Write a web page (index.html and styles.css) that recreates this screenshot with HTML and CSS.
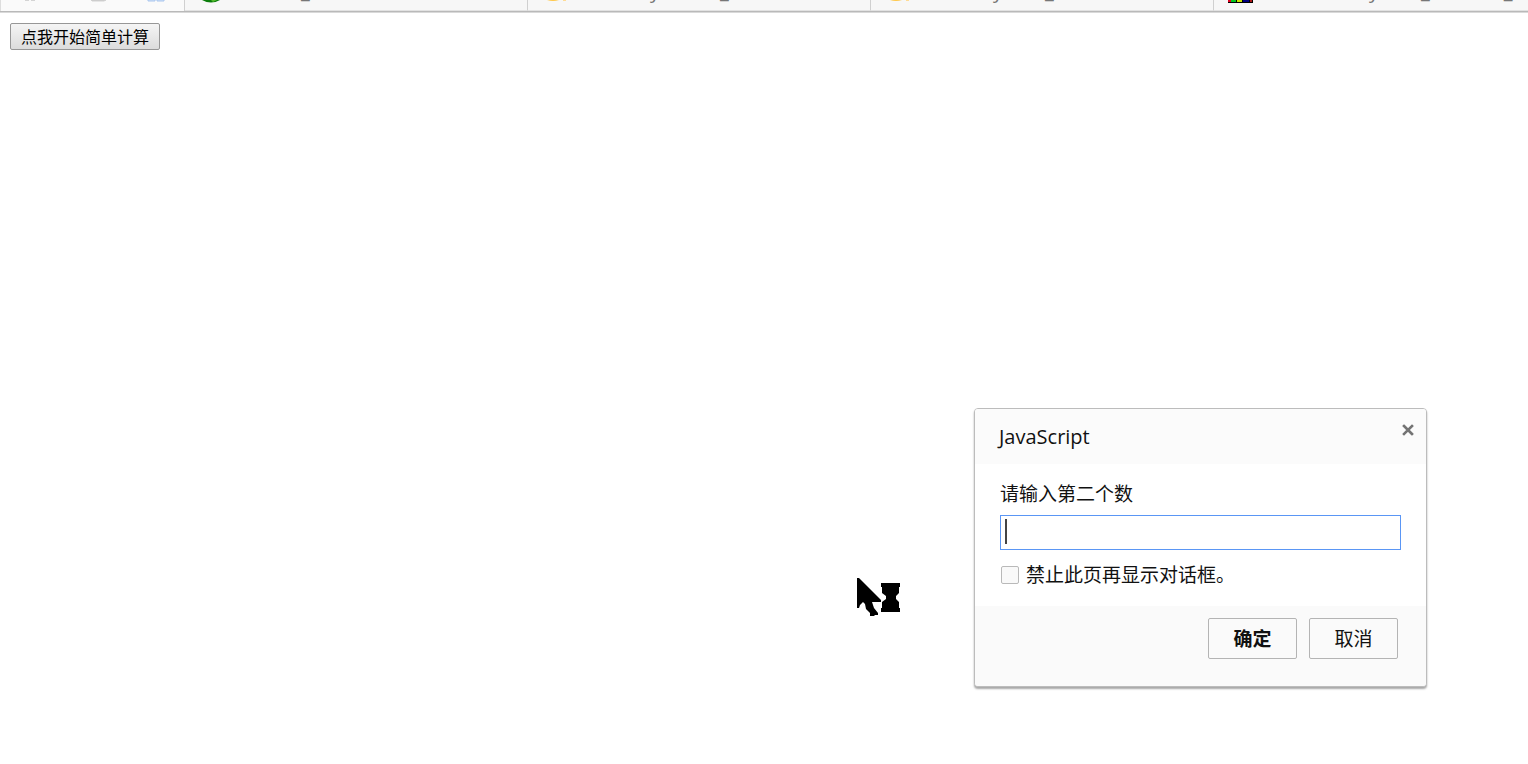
FILE: index.html
```
<!DOCTYPE html>
<html lang="zh-CN">
<head>
    <meta charset="UTF-8">
    <meta name="viewport" content="width=device-width, initial-scale=1.0">
    <title>简单计算</title>
    <link rel="stylesheet" href="styles.css">
</head>
<body>
<!-- 标签栏 -->
<div class="tab-bar">
    <div class="tab-tools">
        <svg width="182" height="4" viewBox="0 0 182 4" aria-hidden="true">
            <path d="M24 0h4M30 0h4" stroke="#d4d4d4" stroke-width="2"/>
            <path d="M90 0h15l-2 1H91z" fill="#bdbdbd" stroke="#d2d2d2"/>
            <path d="M147 0v1h7V0M156 0v1h7V0" fill="#cfe0f8" stroke="#a9c6ee"/>
        </svg>
    </div>
    <div class="tab">
        <svg class="tab-icon" width="26" height="4" viewBox="0 0 26 4" aria-hidden="true">
            <path d="M3 0h18Q12 5 3 0z" fill="#0a7d0a"/>
            <path d="M12 0h6l-4 2z" fill="#54b82c"/>
        </svg>
        <span class="tab-text only">_</span>
    </div>
    <div class="tab">
        <svg class="tab-icon" width="26" height="4" viewBox="0 0 26 4" aria-hidden="true">
            <path d="M5 0h12q-6 2-12 0z" fill="#ffc84a"/>
            <path d="M21 0h3" stroke="#ffdc96" stroke-width="2"/>
        </svg>
        <span class="tab-text first">y</span>
        <span class="tab-text far">_</span>
    </div>
    <div class="tab">
        <svg class="tab-icon" width="26" height="4" viewBox="0 0 26 4" aria-hidden="true">
            <path d="M5 0h12q-6 2-12 0z" fill="#ffc84a"/>
            <path d="M21 0h3" stroke="#ffdc96" stroke-width="2"/>
        </svg>
        <span class="tab-text first">y</span>
        <span class="tab-text near">_</span>
    </div>
    <div class="tab">
        <svg class="tab-icon" width="26" height="4" viewBox="0 0 26 4" aria-hidden="true">
            <path d="M0 0h25v3H0z" fill="#000"/>
            <path d="M0 0h3v2H0z" fill="#e00020"/>
            <path d="M3 0h5v2H3z" fill="#00c820"/>
            <path d="M9 0h5v2H9z" fill="#c8e600"/>
            <path d="M15 0h6v2h-6z" fill="#000080"/>
            <path d="M22 0h2v2h-2z" fill="#b01818"/>
        </svg>
        <span class="tab-text first long">y</span>
        <span class="tab-text near">_</span>
        <span class="tab-text only">_</span>
    </div>
</div>

<main class="content">
    <button type="button" class="start-button">点我开始简单计算</button>
</main>

<!-- 鼠标指针 -->
<svg class="pointer" width="44" height="40" viewBox="0 0 44 40" aria-hidden="true">
    <path d="M0 0h2l22 22v2h-9l2 6 4 5v2h-3l-1 1h-4v-3l-4-4-1-5-2-2-3 3-1 3H0z"/>
    <path d="M24 5h19v4h-1v6l-3 3v3l3 3v6h1v4H24v-4h1v-6l4-3v-3l-4-3V9h-1z"/>
</svg>

<form class="dialog" role="dialog" aria-labelledby="dialog-title">
    <div class="dialog-header">
        <h1 class="dialog-title" id="dialog-title">JavaScript</h1>
        <button type="button" class="close-button" aria-label="关闭">
            <svg width="12" height="12" viewBox="0 0 12 12" aria-hidden="true">
                <path d="M2 2l8 8M10 2L2 10" stroke="#747474" stroke-width="2.6" stroke-linecap="square"/>
            </svg>
        </button>
    </div>
    <div class="dialog-body">
        <label class="prompt-label" for="number">请输入第二个数</label>
        <input type="text" class="prompt-input" id="number" autocomplete="off">
        <div class="check-row">
            <input type="checkbox" class="check" id="suppress">
            <label for="suppress">禁止此页再显示对话框。</label>
        </div>
    </div>
    <div class="dialog-footer">
        <button type="submit" class="dialog-button primary">确定</button>
        <button type="button" class="dialog-button">取消</button>
    </div>
</form>
</body>
</html>
```
FILE: styles.css
```
* {
    box-sizing: border-box;
}

body {
    margin: 0;
    background-color: #fff;
    font-family: "Open Sans", "Noto Sans CJK SC", sans-serif;
    color: #111;
}

/* 标签栏 */
.tab-bar {
    display: flex;
    height: 12px;
    background-color: #f7f7f7;
    border-bottom: 1px solid #b9b9b9;
    box-shadow: 0 1px 0 #d9d9d9;
    overflow: hidden;
}

.tab-tools {
    flex: 0 0 185px;
    background-color: #fafafa;
    border-left: 1px solid #ddd;
    border-right: 1px solid #d0d0d0;
}

.tab-tools svg,
.tab-icon {
    display: block;
}

.tab {
    display: flex;
    align-items: flex-end;
    flex: 0 0 343px;
    height: 11px;
    padding: 0 0 8px 14px;
    border-right: 1px solid #d0d0d0;
    border-bottom: 1px solid #e2e2e2;
    overflow: hidden;
}

.tab-icon {
    flex: none;
    align-self: flex-start;
    margin-right: 2px;
}

.tab-text {
    font-size: 20px;
    line-height: 22px;
    color: #777;
}

.tab-text.only {
    margin-left: 74px;
}

.tab-text.first {
    margin-left: 80px;
}

.tab-text.long {
    margin-left: 113px;
}

.tab-text.near {
    margin-left: 42px;
}

.tab-text.far {
    margin-left: 60px;
}

.content {
    padding: 11px 10px;
}

.start-button {
    display: block;
    height: 27px;
    padding: 0 10px 2px;
    border: 1px solid #979797;
    border-radius: 2px;
    background: linear-gradient(#f5f5f5, #dcdcdc);
    font-family: "Noto Sans CJK SC", sans-serif;
    font-size: 16px;
    line-height: 24px;
    color: #000;
}

.pointer {
    position: absolute;
    left: 857px;
    top: 578px;
}

/* 输入对话框 */
.dialog {
    position: absolute;
    top: 408px;
    right: 101px;
    width: 453px;
    border: 1px solid #bcbcbc;
    border-radius: 4px;
    background-color: #fff;
    box-shadow: 0 2px 2px rgba(0, 0, 0, 0.35);
    font-size: 19px;
    overflow: hidden;
}

.dialog-header {
    display: flex;
    justify-content: space-between;
    align-items: flex-start;
    padding: 15px 12px 15px 24px;
    background-color: #fbfbfb;
}

.dialog-title {
    margin: 0;
    font-size: 20px;
    font-weight: normal;
    line-height: 25px;
}

.close-button {
    padding: 0;
    border: 0;
    background: none;
}

.close-button svg {
    display: block;
}

.dialog-body {
    padding: 16px 25px 17px;
}

.prompt-label {
    display: block;
    margin-bottom: 7px;
    line-height: 28px;
}

/* 左侧渐变为输入光标 */
.prompt-input {
    display: block;
    width: 100%;
    height: 35px;
    padding: 0 4px;
    border: 1px solid #5a96f5;
    outline: 0;
    background: linear-gradient(#444, #444) no-repeat 4px 3px / 2px 25px;
    font-family: inherit;
    font-size: 19px;
}

.check-row {
    display: flex;
    align-items: center;
    gap: 7px;
    margin-top: 11px;
    line-height: 28px;
}

.check {
    appearance: none;
    width: 18px;
    height: 18px;
    margin: 0 0 0 1px;
    border: 1px solid #b9b9b9;
    border-radius: 2px;
    background-color: #f9f9f9;
}

.dialog-footer {
    display: flex;
    justify-content: flex-end;
    gap: 12px;
    padding: 12px 28px 27px;
    background-color: #fafafa;
}

.dialog-button {
    width: 89px;
    height: 41px;
    padding: 0 0 2px;
    border: 1px solid #b4b4b4;
    border-radius: 2px;
    background-color: #fafafa;
    font-family: inherit;
    font-size: 19px;
    color: #111;
}

.dialog-button.primary {
    font-weight: bold;
}
```
